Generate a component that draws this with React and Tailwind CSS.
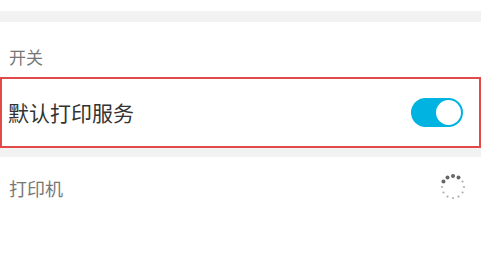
import { useState } from "react";

// 12 dots around the spinner, the first few are bigger and darker
const dots = Array.from({ length: 12 }, (_, i) => {
  const angle = (i * 30 - 60) * (Math.PI / 180);
  const big = i < 4;
  return {
    x: 13 + 11 * Math.sin(angle),
    y: 13 - 11 * Math.cos(angle),
    r: big ? 2 : 1.1,
    o: big ? 0.75 : 0.4,
  };
});

function Spinner() {
  return (
    <svg width="26" height="26" viewBox="0 0 26 26">
      {dots.map((d, i) => (
        <circle key={i} cx={d.x} cy={d.y} r={d.r} fill="#333" opacity={d.o} />
      ))}
    </svg>
  );
}

export default function App() {
  const [on, setOn] = useState(true);

  return (
    <div
      className="w-[481px] h-[257px] bg-white overflow-hidden"
      style={{ fontFamily: '"Noto Sans CJK SC", "Noto Sans", sans-serif' }}
    >
      <div className="h-[11px] bg-white" />
      <div className="h-[11px] bg-[#f2f2f2]" />

      {/* Section title */}
      <div className="h-[55px] flex items-end pb-[12px] pl-[9px]">
        <span className="text-[17px] leading-none text-[#777]">开关</span>
      </div>

      {/* Default print service row */}
      <div className="h-[71px] border-2 border-[#e24a4a] flex items-center justify-between pl-[6px] pr-[16px]">
        <span className="text-[21px] leading-none text-[#333] -mt-[1px]">默认打印服务</span>
        <button
          onClick={() => setOn(!on)}
          className={`w-[52px] h-[29px] rounded-full p-[2px] flex ${on ? "bg-[#00b3e0] justify-end" : "bg-[#ccc] justify-start"}`}
        >
          <span className="w-[25px] h-[25px] rounded-full bg-white" />
        </button>
      </div>

      <div className="h-[9px] bg-[#f2f2f2]" />

      {/* Printers */}
      <div className="h-[60px] flex items-center justify-between pl-[9px] pr-[15px]">
        <span className="text-[18px] leading-none text-[#777] mt-[2px]">打印机</span>
        <Spinner />
      </div>
    </div>
  );
}
